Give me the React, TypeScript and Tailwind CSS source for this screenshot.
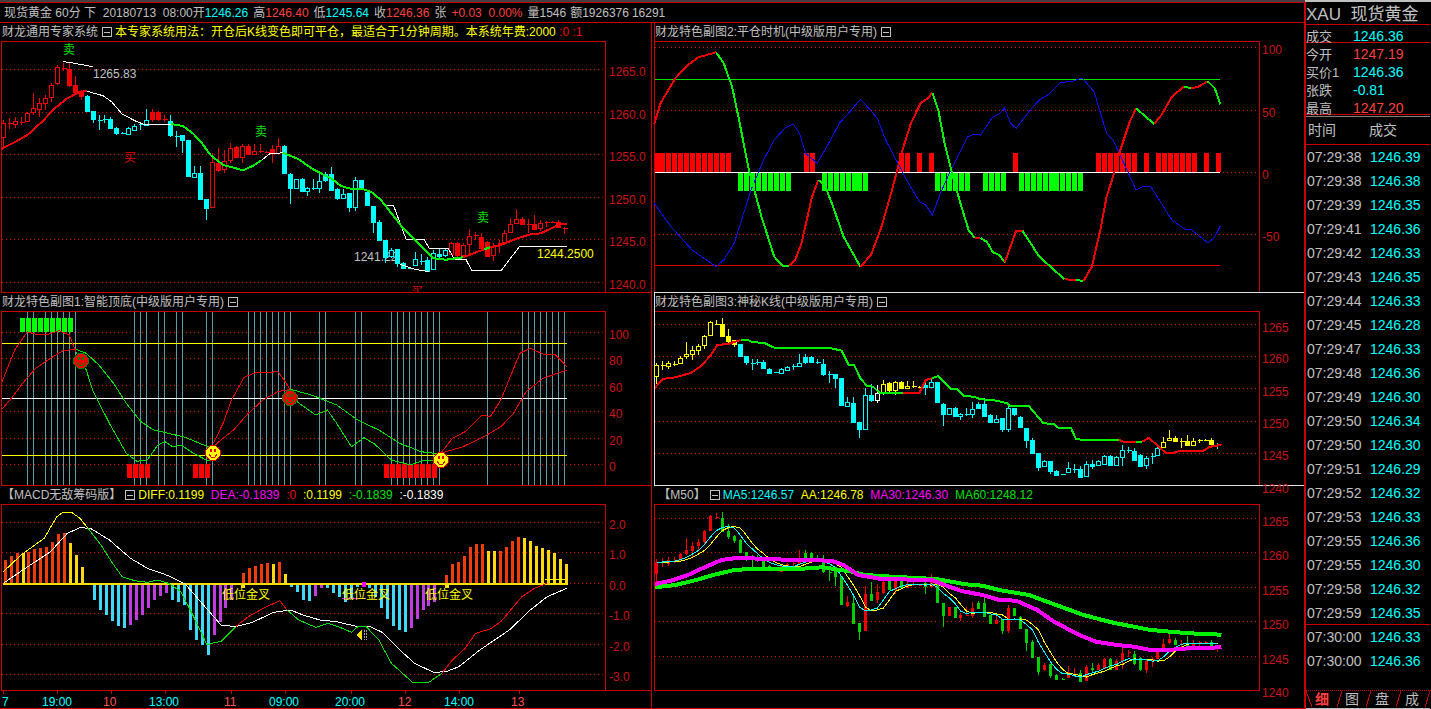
import React from "react";

type Seg = [string, number[]];
const RED = "#c80000";
const AX = "#c81414";

// candles in reference-measured coordinates: top, bottom, wick top, wick bottom, hollow(1)/solid(0)
const K: number[][] = [
  [370,412,360,445,1],[370,370,355,388,1],[363,373,352,385,1],[365,365,352,375,1],[340,362,335,365,1],
  [325,335,280,345,1],[310,326,295,350,1],[295,308,285,330,1],[256,292,250,305,1],[200,250,195,255,1],
  [205,205,190,212,1],[208,256,185,260,0],[256,275,228,285,0],[272,287,270,300,0],[288,332,285,335,0],
  [334,358,334,368,0],[360,360,345,390,0],[358,358,345,370,0],[357,383,350,385,0],[384,400,380,405,0],
  [398,398,396,400,0],[384,403,380,405,1],[378,390,372,392,1],[373,373,365,390,1],[360,375,327,378,1],
  [337,358,327,365,0],[337,358,333,362,0],[358,358,345,365,0],[364,405,345,412,0],[407,407,393,440,0],
  [405,420,405,460,0],[420,527,420,530,0],[518,530,497,535,1],[520,597,497,597,0],[597,625,597,660,0],
  [487,622,460,622,1],[488,510,445,515,0],[482,508,450,520,1],[445,480,430,488,1],[442,470,438,475,0],
  [438,470,432,488,1],[438,462,432,465,0],[452,462,432,465,1],[452,452,432,460,1],[455,455,453,457,1],
  [447,458,435,490,0],[438,458,415,460,1],[438,518,435,520,0],[522,565,520,612,0],[538,565,538,567,1],
  [538,572,535,575,0],[565,572,560,588,1],[565,565,538,570,1],[542,565,518,578,1],[522,540,515,545,0],
  [522,570,502,572,0],[566,595,565,600,0],[583,595,568,598,1],[580,622,580,635,0],[540,622,530,633,1],
  [540,565,540,570,0],[575,615,570,618,0],[618,667,618,698,0],[665,720,660,722,0],[720,772,720,790,0],
  [750,768,745,775,1],[748,790,748,800,0],[790,804,785,808,0],[803,803,801,805,0],[778,795,755,798,1],
  [783,783,762,796,1],[780,812,770,815,0],[760,808,750,808,1],[762,768,745,780,0],[750,765,745,770,1],
  [730,762,725,765,1],[730,765,725,770,0],[735,765,730,768,1],[707,733,688,768,1],[705,705,695,720,1],
  [712,745,700,750,0],[725,768,722,772,0],[738,766,730,782,1],[730,730,720,760,1],[698,725,690,730,1],
  [673,696,655,700,1],[657,668,628,672,1],[658,672,650,675,0],[672,672,658,700,1],[672,687,645,690,0],
  [670,685,660,692,1],[665,665,663,680,1],[665,665,663,668,1],[665,682,660,685,0],[685,685,680,702,1],
];
const bx = (x0: number, i: number) => Math.round(x0 + 5.97 * i) + 0.5;
const range = (a: number, b: number) => Array.from({ length: b - a + 1 }, (_, i) => a + i);

function Line({ c, w = 1, p, ox, oy }: { c: string; w?: number; p: number[]; ox: number; oy: number }) {
  const pts: string[] = [];
  for (let i = 0; i < p.length; i += 2) pts.push(`${(ox + p[i] / 2.376).toFixed(1)},${(oy + p[i + 1] / 3).toFixed(1)}`);
  return <polyline points={pts.join(" ")} fill="none" stroke={c} strokeWidth={w} shapeRendering="crispEdges" />;
}
function Lines({ s, w, ox, oy }: { s: Seg[]; w?: number; ox: number; oy: number }) {
  return <>{s.map((g, i) => <Line key={i} c={g[0]} w={w} p={g[1]} ox={ox} oy={oy} />)}</>;
}
function Dots({ ys, x1, x2 }: { ys: number[]; x1: number; x2: number }) {
  return <>{ys.map((y) => <line key={y} x1={x1} x2={x2} y1={y + 0.5} y2={y + 0.5} stroke={RED} strokeDasharray="1 3" />)}</>;
}
function Axis({ x, l }: { x: number; l: [string, number][] }) {
  return <>{l.map(([t, y]) => <text key={t} x={x} y={y + 4} fontSize={12} fill={AX}>{t}</text>)}</>;
}
function Candles({ x0, a, b, color, thin }: { x0: number; a: number; b: number; color: (i: number) => string; thin?: boolean }) {
  return (
    <g shapeRendering="crispEdges">
      {K.map((k, i) => {
        const x = bx(x0, i);
        const c = color(i);
        const t = Math.round(a + b * k[0]) + 0.5;
        const e = Math.round(a + b * k[1]) + 0.5;
        const wt = a + b * k[2];
        const wb = a + b * k[3];
        return (
          <g key={i}>
            <line x1={x} x2={x} y1={wt} y2={wb} stroke={c} />
            {t === e ? (
              <line x1={x - (thin ? 1 : 2)} x2={x + (thin ? 2 : 3)} y1={t} y2={t} stroke={c} />
            ) : thin ? (
              <rect x={x - 1} y={t} width={2} height={e - t} stroke={c} fill={c} />
            ) : (
              <rect x={x - 2} y={t} width={4} height={e - t} stroke={c} fill={k[4] ? "#000" : c} />
            )}
          </g>
        );
      })}
    </g>
  );
}
function Face({ x, y, face, ring, eye }: { x: number; y: number; face: string; ring: string; eye: string }) {
  return (
    <g shapeRendering="crispEdges">
      <circle cx={x} cy={y} r={7.5} fill={face} stroke={ring} />
      <rect x={x - 3} y={y - 4} width={2} height={3} fill={eye} />
      <rect x={x + 1} y={y - 4} width={2} height={3} fill={eye} />
      <path d={`M${x - 4} ${y + 1}L${x - 2} ${y + 4}H${x + 2}L${x + 4} ${y + 1}`} fill="none" stroke={eye} />
    </g>
  );
}
function Box() {
  return (
    <svg width="10" height="10" viewBox="0 0 10 10" className="ml-[4px] mr-[3px] shrink-0" shapeRendering="crispEdges">
      <rect x="0.5" y="0.5" width="9" height="9" fill="none" stroke="#c0c0c0" />
      <line x1="2" x2="8" y1="5" y2="5" stroke="#c0c0c0" />
    </svg>
  );
}
function Title({ flush, children }: { flush?: boolean; children: React.ReactNode }) {
  return (
    <div className={flush ? "h-[18px] flex items-center text-[12px] leading-none whitespace-pre text-[#c0c0c0]" : "h-[18px] flex items-center pl-[1px] text-[12px] leading-none whitespace-pre text-[#c0c0c0]"}>
      {children}
    </div>
  );
}
function Plot({ x, y, w, h, children }: { x: number; y: number; w: number; h: number; children: React.ReactNode }) {
  return (
    <svg viewBox={`${x} ${y} ${w} ${h}`} width={w} height={h} className="block overflow-visible">
      {children}
    </svg>
  );
}

/* ---------- main chart ---------- */
function Chart1() {
  const color = (i: number) => ((i <= 13 || (i >= 25 && i <= 27) || (i >= 35 && i <= 46) || i >= 75) ? "#f00000" : "#00ffff");
  return (
    <Plot x={2} y={42} w={603} h={250}>
      <Dots ys={[69, 112, 154, 197, 239, 282]} x1={2} x2={604} />
      <Axis x={609} l={[["1265.0", 72], ["1260.0", 115], ["1255.0", 157], ["1250.0", 200], ["1245.0", 242], ["1240.0", 285]]} />
      <text x={354} y={261} fontSize={12} fill="#c0c0c0">1241.22</text>
      <Candles x0={3} a={0} b={1 / 3} color={color} />
      <Line c="#fff" ox={0} oy={0} p={[150,185,165,187,220,200]} />
      <Line c="#fff" ox={0} oy={0} p={[207,274,245,287,265,305,290,342,320,362,340,372,407,372]} />
      <Line c="#fff" ox={0} oy={0} p={[622,480,640,462,672,458]} />
      <Line c="#fff" ox={0} oy={0} p={[920,616,935,616,965,718,1007,718,1020,745,1065,745,1080,778,1107,778,1120,810,1192,810,1235,738,1347,738]} />
      <Line c="#fff" ox={0} oy={0} p={[950,793,985,808,1020,815]} />
      <Lines w={2} ox={0} oy={0} s={[
        ["#f00000",[3,447,30,430,65,405,100,365,130,325,160,295,190,275,207,274]],
        ["#00f000",[407,372,435,378,460,402,480,430,500,465,530,495,560,505,578,511,600,498,622,480]],
        ["#00f000",[672,458,710,478,740,505,770,525,790,538,810,558,835,567,860,566,885,578,905,600,930,640,955,680,985,718,1010,750,1030,775,1060,779,1100,772]],
        ["#f00000",[1100,772,1150,748]],["#00f000",[1150,748,1165,742]],
        ["#f00000",[1165,742,1190,735,1230,715,1260,703,1285,700,1310,685,1330,672,1348,672]],
      ]} />
      <text x={63} y={54} fontSize={12} fill="#00e000">卖</text>
      <text x={255} y={136} fontSize={12} fill="#00e000">卖</text>
      <text x={477} y={222} fontSize={12} fill="#00e000">卖</text>
      <text x={124} y={162} fontSize={12} fill="#e00000">买</text>
      <clipPath id="cut"><rect x={400} y={280} width={40} height={12} /></clipPath>
      <text x={411} y={296} fontSize={12} fill="#e00000" clipPath="url(#cut)">买</text>
      <text x={93} y={78} fontSize={12} fill="#c0c0c0">1265.83</text>
      <text x={537} y={258} fontSize={12} fill="#ffff00">1244.2500</text>
    </Plot>
  );
}

/* ---------- 平仓时机 ---------- */
function Chart2() {
  const reds = [...range(0, 12), 25, 26, 41, 42, 44, 46, 60, ...range(74, 80), 82, ...range(84, 90), 92, 94];
  const greens = [...range(14, 22), ...range(28, 35), ...range(47, 52), ...range(55, 58), ...range(61, 71)];
  return (
    <Plot x={655} y={42} w={604} h={250}>
      <Dots ys={[47, 110, 172, 234]} x1={655} x2={1258} />
      <Axis x={1262} l={[["100", 50], ["50", 113], ["0", 175], ["-50", 237]]} />
      <g shapeRendering="crispEdges">
        {reds.map((i) => <rect key={i} x={bx(654.5, i) - 0.5} y={153} width={5} height={19} fill="#ff0000" />)}
        {greens.map((i) => <rect key={i} x={bx(654.5, i) - 0.5} y={173} width={5} height={18} fill="#00ff00" />)}
        <line x1={655} x2={1220} y1={79.5} y2={79.5} stroke="#00e000" />
        <line x1={655} x2={1220} y1={265.5} y2={265.5} stroke="#e00000" />
        <rect x={655} y={172} width={565} height={1} fill="#fff" />
      </g>
      <Line c="#0c0cf0" ox={650} oy={0} p={[10,610,50,680,100,750,157,800,175,780,200,730,240,570,270,480,295,420,320,385,340,372,355,400,370,460,397,490,420,440,450,370,475,335,500,298,520,325,540,355,560,420,585,480,610,540,640,605,655,615,671,645,690,580,715,510,755,410,770,403,785,405,815,350,830,342,842,324,857,370,870,385,900,335,925,300,945,285,975,248,1005,243,1027,234,1055,275,1085,400,1100,420,1115,460,1155,570,1170,560,1190,560,1210,600,1240,660,1270,687,1285,688,1325,728,1340,715,1355,678]} />
      <Lines w={2} ox={650} oy={0} s={[
        ["#f00000",[10,372,25,310,60,235,90,195,115,172,157,157]],
        ["#00f000",[157,157,175,190,195,260,210,350,235,510,265,650,295,770,315,797,330,797]],
        ["#f00000",[330,797,345,780,360,730,385,590,400,540]],
        ["#00f000",[400,540,415,555,435,620,460,710,500,800]],
        ["#f00000",[500,800,525,765,550,680,575,570,600,450,620,370,643,310,660,295,671,278]],
        ["#00f000",[671,278,685,330,700,430,720,530,740,620,757,690,772,714]],
        ["#f00000",[772,714,785,714]],
        ["#00f000",[785,714,800,725,815,757,830,765,843,787]],
        ["#f00000",[843,787,870,692,885,692]],
        ["#00f000",[885,692,925,770,985,838]],
        ["#f00000",[985,838,1012,840]],
        ["#00f000",[1012,840,1030,843]],
        ["#f00000",[1030,843,1050,800,1070,690,1085,590,1100,530,1115,460,1140,365,1155,325]],
        ["#00f000",[1155,325,1198,372]],
        ["#f00000",[1198,372,1215,345,1240,290,1268,260]],
        ["#00f000",[1268,260,1285,264]],
        ["#f00000",[1285,264,1300,262,1325,244]],
        ["#00f000",[1325,244,1342,265,1355,313]],
      ]} />
    </Plot>
  );
}

/* ---------- 智能顶底 ---------- */
function Chart3() {
  const v = [4,5,7,8,9,10,11,12,22,23,24,26,27,29,30,34,35,41,42,43,44,45,46,47,48,53,54,59,60,65,66,67,68,69,70,71,72,73,81,87,88,89,90,91,92,93,94];
  return (
    <Plot x={2} y={312} w={603} h={173}>
      <Dots ys={[332, 358, 385, 411, 438, 464]} x1={2} x2={604} />
      <Axis x={609} l={[["100", 335], ["80", 361], ["60", 388], ["40", 414], ["20", 441], ["0", 467]]} />
      <g shapeRendering="crispEdges">
        {v.map((i) => <line key={i} x1={bx(3, i)} x2={bx(3, i)} y1={312} y2={485} stroke="#5c9ca2" />)}
        {range(3, 11).map((i) => <rect key={i} x={bx(3, i) - 2} y={318} width={5} height={14} fill="#00ff00" />)}
        {[...range(21, 24), 32, 33, 34, ...range(64, 72)].map((i) => <rect key={i} x={bx(3, i) - 2} y={464} width={5} height={14} fill="#ff0000" />)}
        <line x1={2} x2={567} y1={343.5} y2={343.5} stroke="#ffff00" />
        <line x1={2} x2={567} y1={398.5} y2={398.5} stroke="#fff" />
        <line x1={2} x2={567} y1={455.5} y2={455.5} stroke="#ffff00" />
      </g>
      <Lines ox={0} oy={290} s={[
        ["#f00000",[5,275,35,180,65,125,90,135,115,133,140,122,165,135,180,185]],
        ["#00e000",[180,185,205,240,220,300,260,400,300,490,325,514,350,510,375,465,392,455,410,470,430,465,460,490,490,510,507,510]],
        ["#f00000",[507,460,530,400,550,330,580,262,610,247,640,247,660,245,675,270,690,300]],
        ["#00e000",[690,300,700,330,750,375,778,360,800,400,835,470,865,443,890,462,930,510,975,525,1010,510,1047,510]],
        ["#f00000",[1047,490,1075,445,1105,425,1145,375,1165,380,1190,330,1235,190,1260,175,1290,192,1318,192,1347,230]],
        ["#f00000",[5,357,30,320,60,270,85,235,120,205,150,182,180,178]],
        ["#00e000",[180,178,205,190,235,225,270,280,300,340,335,395,365,420,400,430,440,442,490,468,507,470]],
        ["#f00000",[507,470,520,455,555,420,590,370,625,330,660,305,690,298]],
        ["#00e000",[690,298,740,315,800,345,850,390,900,420,950,460,1000,485,1047,492]],
        ["#f00000",[1047,490,1100,470,1150,440,1190,410,1220,370,1250,305,1290,265,1347,240]],
      ]} />
      <Face x={81} y={361} face="#f00000" ring="#008000" eye="#008000" />
      <Face x={290} y={398} face="#f00000" ring="#008000" eye="#008000" />
      <Face x={213} y={453} face="#ffff00" ring="#e00000" eye="#e00000" />
      <Face x={441} y={460} face="#ffff00" ring="#e00000" eye="#e00000" />
    </Plot>
  );
}

/* ---------- 神秘K线 ---------- */
function Chart4() {
  const a = 271.8, b = 0.2523;
  const color = (i: number) => {
    if (i === 37) return "#ffffff";
    return i <= 13 || (i >= 38 && i <= 44) || (i >= 85 && i <= 93) ? "#ffff00" : "#00ffff";
  };
  return (
    <Plot x={655} y={312} w={604} h={173}>
      <Dots ys={[324, 356, 388, 421, 453]} x1={655} x2={1258} />
      <Axis x={1262} l={[["1265", 328], ["1260", 359], ["1255", 392], ["1250", 424], ["1245", 456], ["1240", 489]]} />
      <Candles x0={656} a={a} b={b} color={color} />
      <Lines w={2} ox={650} oy={290} s={[
        ["#f00000",[12,293,30,267,60,262,95,250,120,230,145,195,160,165,185,162,215,150]],
        ["#00f000",[215,150,233,150,243,157,270,158,295,173,425,173,455,182,472,225,485,225,500,265,515,287,530,290,545,308,570,308]],
        ["#00f000",[570,310,600,310]],
        ["#f00000",[600,308,640,308,655,270,670,265]],
        ["#00f000",[670,265,685,258,715,297,730,297,745,318,770,320,785,328,815,330,850,340,855,348,900,348,935,400,960,402,970,413,1000,413,1012,447,1030,450,1115,450]],
        ["#f00000",[1115,450,1125,455,1155,455]],["#00f000",[1155,455,1170,455]],
        ["#f00000",[1170,455,1185,443,1225,488,1245,488,1260,482,1315,482,1330,470,1345,468,1358,463]],
      ]} />
    </Plot>
  );
}

/* ---------- MACD ---------- */
const MACD: [number, string][] = [
  [240,"o"],[228,"o"],[219,"o"],[220,"y"],[215,"o"],[207,"o"],[203,"o"],[200,"o"],[185,"o"],[162,"o"],[160,"o"],[188,"y"],[225,"y"],[260,"y"],[310,""],
  [360,"c"],[390,"c"],[405,"c"],[423,"c"],[437,"c"],[443,"c"],[435,"m"],[420,"m"],[405,"m"],[385,"m"],[360,"m"],[348,"m"],[340,"m"],[360,"c"],[367,"c"],[375,"c"],
  [450,"c"],[480,"c"],[495,"c"],[525,"c"],[465,"m"],[425,"m"],[385,"m"],[360,"m"],[310,""],[280,"o"],[265,"o"],[258,"o"],[252,"o"],[250,"o"],[252,"y"],[246,"o"],[282,"y"],
  [322,"c"],[335,"c"],[360,"c"],[362,"c"],[348,"m"],[323,"m"],[325,"c"],[340,"c"],[350,"c"],[365,"c"],[355,"c"],[320,"c"],[320,"c"],[325,"c"],[350,"c"],[385,"c"],[417,"c"],[437,"c"],[450,"c"],[455,"c"],
  [443,"m"],[417,"m"],[390,"m"],[378,"m"],[365,"m"],[310,""],[285,"o"],[252,"o"],[246,"o"],[228,"o"],[200,"o"],[192,"o"],[192,"o"],[213,"y"],[213,"y"],[213,"o"],[200,"o"],[183,"o"],[172,"o"],[175,"y"],[183,"y"],[198,"y"],[204,"y"],[211,"y"],[218,"y"],[237,"y"],[252,"y"],
];
const MC: Record<string, string> = { o: "#f03c08", y: "#ffd810", c: "#40d8f8", m: "#c03ce0" };
function Chart5() {
  return (
    <Plot x={2} y={505} w={603} h={185}>
      <Dots ys={[522, 552, 583, 613, 644, 674]} x1={2} x2={604} />
      <Axis x={609} l={[["2.0", 525], ["1.0", 555], ["0.0", 586], ["-1.0", 616], ["-2.0", 647], ["-3.0", 677]]} />
      <g shapeRendering="crispEdges">
        {MACD.map(([z, c], i) => {
          if (!c) return null;
          const y = 480 + z / 3;
          return <rect key={i} x={bx(2.6, i)} y={Math.min(y, 583)} width={3} height={Math.abs(y - 583)} fill={MC[c]} />;
        })}
        <rect x={3} y={583} width={565} height={1.5} fill="#ffe000" />
        <rect x={241} y={584} width={4} height={4} fill="#ffe000" />
        <rect x={362} y={582} width={4} height={5} fill="#ff00ff" />
        <rect x={445} y={584} width={4} height={4} fill="#ffe000" />
        <line x1={342} x2={366} y1={598} y2={598} stroke="#ff00ff" />
      </g>
      <text x={222} y={599} fontSize={12} fill="#ffff00">低位金叉</text>
      <text x={342} y={599} fontSize={12} fill="#ffff00">低位金叉</text>
      <text x={425} y={599} fontSize={12} fill="#ffff00">低位金叉</text>
      <Line c="#fff" ox={0} oy={480} p={[8,310,60,265,120,215,160,160,190,143,215,145,260,180,310,235,350,265,400,287,440,312,480,370,525,435,560,440,600,427,650,397,690,390,720,405,760,420,800,425,850,440,880,440,910,458,950,510,985,550,1030,577,1060,575,1090,560,1140,510,1210,450,1260,390,1300,350,1347,325]} />
      <Lines ox={0} oy={480} s={[
        ["#ffff00",[8,275,50,225,105,175,135,110,150,97,170,97,190,115,208,143]],
        ["#00e000",[208,143,240,195,265,245,290,290,320,302,350,307,375,300,400,310,430,335,460,410,492,495,510,487,525,485,560,440]],
        ["#f00000",[560,440,590,410,630,382,665,362,682,390]],
        ["#00e000",[682,390,710,420,750,442,780,430,810,443,835,457,850,440,870,440,900,480,930,550,980,607,1020,606,1050,580]],
        ["#f00000",[1050,580,1075,540,1105,505,1130,460,1165,447,1190,425,1240,350,1270,325,1300,310]],
        ["#ffff00",[1295,300,1345,298]],
      ]} />
      <g shapeRendering="crispEdges">
        <polygon points="356,635 362,630 362,640" fill="#ffe000" />
        <path d="M364 630V640M366 630V640" stroke="#a0a0a0" strokeDasharray="2 1" />
      </g>
    </Plot>
  );
}

/* ---------- M50 ---------- */
const zc = K.map((k) => (k[4] ? k[0] : k[1]));
const ma = (n: number, sh: number) =>
  K.map((_, i) => {
    const s = zc.slice(Math.max(0, i - n + 1 - sh), i + 1 - sh);
    return s.length ? s.reduce((p, q) => p + q, 0) / s.length : zc[0];
  });
function Chart6() {
  const a = 462.1, b = 0.27;
  const path = (arr: number[]) => arr.map((z, i) => `${bx(656, i)},${(a + b * z).toFixed(1)}`).join(" ");
  return (
    <Plot x={655} y={505} w={604} h={185}>
      <Dots ys={[518, 552, 587, 621, 656]} x1={655} x2={1258} />
      <Axis x={1262} l={[["1265", 522], ["1260", 556], ["1255", 591], ["1250", 625], ["1245", 660], ["1240", 693]]} />
      <Candles x0={656} a={a} b={b} thin color={(i) => (K[i][4] ? "#f00000" : "#00d000")} />
      <polyline points={path(ma(5, 1))} fill="none" stroke="#ffff00" shapeRendering="crispEdges" />
      <polyline points={path(ma(5, 0))} fill="none" stroke="#00ffff" shapeRendering="crispEdges" />
      <Line c="#00f000" w={4} ox={650} oy={480} p={[12,322,60,315,110,300,150,285,200,270,240,267,350,267,410,262,480,275,510,285,600,292,680,297,750,313,790,317,830,330,900,345,950,368,1030,405,1100,428,1190,450,1280,460,1358,464]} />
      <Line c="#ff00ff" w={4} ox={650} oy={480} p={[12,312,50,302,90,285,130,262,170,240,210,233,290,238,430,242,460,255,495,285,550,297,670,300,700,315,740,333,790,345,830,360,870,362,920,390,960,425,1020,465,1060,485,1110,495,1150,500,1190,510,1230,510,1280,505,1358,502]} />
    </Plot>
  );
}

/* ---------- time axis ---------- */
function TimeAxis() {
  const ticks = [3, 57, 111, 165, 231, 285, 351, 405, 459, 519];
  const labels: [string, number, string][] = [
    ["7", 2, "#00ffff"], ["19:00", 42, "#00ffff"], ["10", 103, "#ff5050"], ["13:00", 149, "#00ffff"], ["11", 224, "#ff5050"],
    ["09:00", 269, "#00ffff"], ["20:00", 335, "#00ffff"], ["12", 398, "#ff5050"], ["14:00", 444, "#00ffff"], ["13", 511, "#ff5050"],
  ];
  return (
    <svg width={651} height={17} viewBox="0 691 651 17" className="block shrink-0 -ml-[1px]">
      {ticks.map((t) => <line key={t} x1={t + 0.5} x2={t + 0.5} y1={691} y2={694} stroke={RED} />)}
      {labels.map(([t, x, c]) => <text key={t} x={x} y={706} fontSize={12} fill={c}>{t}</text>)}
    </svg>
  );
}

/* ---------- sidebar ---------- */
const TICKS: [string, string][] = [
  ["07:29:38","1246.39"],["07:29:38","1246.38"],["07:29:39","1246.35"],["07:29:41","1246.36"],["07:29:42","1246.33"],["07:29:43","1246.35"],
  ["07:29:44","1246.33"],["07:29:45","1246.28"],["07:29:47","1246.33"],["07:29:48","1246.36"],["07:29:49","1246.30"],["07:29:50","1246.34"],
  ["07:29:50","1246.30"],["07:29:51","1246.29"],["07:29:52","1246.32"],["07:29:53","1246.33"],["07:29:55","1246.36"],["07:29:55","1246.30"],
  ["07:29:58","1246.32"],["07:29:59","1246.35"],["07:30:00","1246.33"],["07:30:00","1246.36"],
];
function Quote({ l, v, c }: { l: string; v: string; c: string }) {
  return (
    <div className="h-[18px] flex items-center pt-[4px]">
      <span className="w-[47px] text-[#c0c0c0] text-[13px]">{l}</span>
      <span className={c}>{v}</span>
    </div>
  );
}
function Sidebar() {
  return (
    <div className="w-[126px] flex flex-col border-l-2 border-[#c80000] text-[14px] leading-none -ml-[1px]">
      <div className="h-[23px] shrink-0 flex items-center pt-[2px] border-b border-[#c80000] text-[#c0c0c0] text-[17px] whitespace-pre">XAU  现货黄金</div>
      <div className="h-[18px] shrink-0 flex items-center pt-[5px] border-b border-[#c80000]">
        <span className="w-[47px] text-[#c0c0c0] text-[13px]">成交</span>
        <span className="text-[#00ffff]">1246.36</span>
      </div>
      <div className="h-[72px] shrink-0 flex flex-col border-b border-[#c80000]">
        <Quote l="今开" v="1247.19" c="text-[#ff4040]" />
        <Quote l="买价1" v="1246.36" c="text-[#00ffff]" />
        <Quote l="张跌" v="-0.81" c="text-[#00ffff]" />
        <Quote l="最高" v="1247.20" c="text-[#ff4040]" />
      </div>
      <div className="h-[29px] shrink-0 flex items-center pl-[1px] pb-[2px] mt-[1px] border-t border-b border-t-[#808080] border-b-[#c80000] text-[#c0c0c0]">
        <span className="w-[62px] pl-[1px]">时间</span>
        <span>成交</span>
      </div>
      <div className="flex flex-col flex-1">
        {TICKS.map(([t, v], i) => (
          <div key={i} className={i === 19 ? "h-[24px] flex items-center border-b border-[#c80000]" : "h-[24px] flex items-center"}>
            <span className="w-[64px] pl-[1px] text-[#c0c0c0]">{t}</span>
            <span className="text-[#00ffff]">{v}</span>
          </div>
        ))}
      </div>
      <div className="h-[19px] shrink-0 flex items-center relative text-[14px] text-[#c0c0c0] border-b border-[#c0c0c0]">
        <svg width="126" height="18" viewBox="0 0 126 18" className="absolute inset-0" shapeRendering="crispEdges">
          <line x1="0" x2="126" y1="0.5" y2="0.5" stroke="#c80000" strokeDasharray="1 1" />
          {[30, 59, 89, 118].map((x) => <path key={x} d={`M${x + 6} 1L${x + 1} 17`} stroke="#c80000" fill="none" />)}
          <path d="M0 1L6 17" stroke="#c80000" fill="none" />
        </svg>
        <span className="ml-[1px] w-[30px] text-center font-bold text-[#ff4040] relative">细</span>
        <span className="w-[30px] text-center relative">图</span>
        <span className="w-[30px] text-center relative">盘</span>
        <span className="w-[30px] text-center relative">成</span>
      </div>
    </div>
  );
}

function H({ c, children }: { c?: string; children: React.ReactNode }) {
  return <span className={c}>{children}</span>;
}

export default function App() {
  return (
    <div className="w-[1431px] h-[709px] bg-black flex flex-col overflow-hidden font-['Liberation_Sans','Noto_Sans_CJK_SC',sans-serif]">
      <div className="h-[2px] shrink-0 flex">
        <div className="flex-1 bg-[#404040]" />
        <div className="w-[126px] bg-[#c0c0c0]" />
      </div>
      <div className="flex flex-1 min-h-0">
        <div className="w-[1305px] flex flex-col">
          {/* header */}
          <div className="h-[21px] shrink-0 border-y border-[#c80000] flex items-center pl-[4px] text-[12px] leading-none whitespace-pre text-[#c0c0c0]">
            <H>现货黄金 </H><H>60分 </H><H>下  </H><H>20180713  08:00开</H><H c="text-[#00ffff]">1246.26</H>
            <H c="ml-[5px]">高</H><H c="text-[#ff4040]">1246.40</H>
            <H c="ml-[5px]">低</H><H c="text-[#00ffff]">1245.64</H>
            <H c="ml-[5px]">收</H><H c="text-[#ff4040]">1246.36</H>
            <H c="ml-[5px] mr-[5px]">张</H><H c="text-[#ff4040]">+0.03  0.00%</H>
            <H c="ml-[5px]">量1546</H><H c="ml-[4px]">额1926376</H><H c="ml-[3px]">16291</H>
          </div>
          <div className="flex flex-1 min-h-0">
            {/* left column */}
            <div className="w-[652px] border-r border-[#c80000] pl-[1px] flex flex-col">
              <div className="h-[270px] shrink-0 border-b border-[#c80000] flex flex-col">
                <Title>
                  财龙通用专家系统<Box /><H c="text-[#ffff00]">本专家系统用法：开仓后K线变色即可平仓，最适合于1分钟周期。本系统年费:2000</H><H c="text-[#f00000]"> :0 :1</H>
                </Title>
                <div className="w-[605px] flex-1 border-x border-t border-[#c80000]"><Chart1 /></div>
              </div>
              <div className="h-[193px] shrink-0 border-b border-[#c80000] flex flex-col">
                <Title>财龙特色副图1:智能顶底(中级版用户专用)<Box /></Title>
                <div className="w-[605px] flex-1 border-x border-t border-[#c80000]"><Chart3 /></div>
              </div>
              <div className="h-[205px] shrink-0 border-b border-[#c80000] flex flex-col">
                <Title>
                  <H>【MACD无敌筹码版】</H><Box /><H c="text-[#ffff00]">DIFF:0.1199  </H><H c="text-[#ff00ff]">DEA:-0.1839  </H><H c="text-[#f00000]">:0  </H>
                  <H c="text-[#ffff00]">:0.1199  </H><H c="text-[#00e000]">:-0.1839  </H><H c="text-[#fff]">:-0.1839</H>
                </Title>
                <div className="w-[605px] flex-1 border-x border-t border-[#c80000]"><Chart5 /></div>
              </div>
              <TimeAxis />
            </div>
            {/* right column */}
            <div className="w-[651px] ml-[2px] flex flex-col">
              <div className="h-[269px] shrink-0 border-l border-[#c80000] flex flex-col">
                <Title flush>财龙特色副图2:平仓时机(中级版用户专用)<Box /></Title>
                <div className="w-[605px] flex-1 border-r border-t border-[#c80000]"><Chart2 /></div>
              </div>
              <div className="h-[194px] shrink-0 border border-[#e0e0e0] flex flex-col">
                <Title flush>财龙特色副图3:神秘K线(中级版用户专用)<Box /></Title>
                <div className="w-[605px] flex-1 border-r border-t border-[#c80000]"><Chart4 /></div>
              </div>
              <div className="h-[205px] shrink-0 flex flex-col">
                <Title><H>{" "}【M50】</H><Box /><H c="text-[#00ffff]">MA5:1246.57  </H><H c="text-[#ffff00]">AA:1246.78  </H><H c="text-[#ff00ff]">MA30:1246.30  </H><H c="text-[#00e000]">MA60:1248.12</H></Title>
                <div className="w-[606px] flex-1 border border-[#c80000]"><Chart6 /></div>
              </div>
            </div>
          </div>
          <div className="h-[1px] shrink-0 bg-[#c80000]" />
        </div>
        <Sidebar />
      </div>
    </div>
  );
}
